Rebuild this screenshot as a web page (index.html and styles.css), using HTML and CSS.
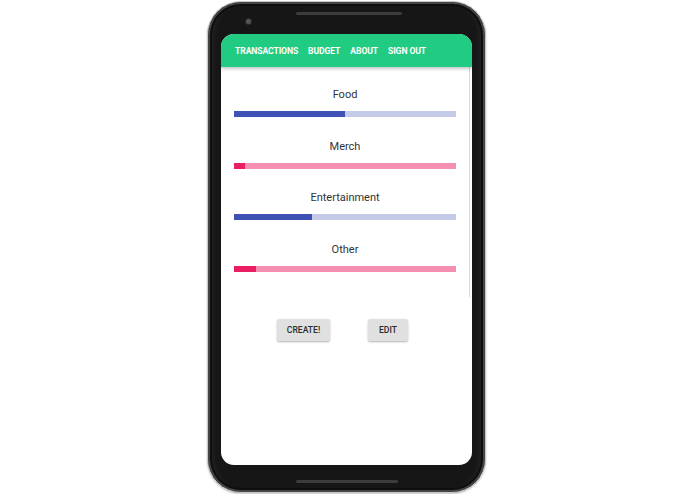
FILE: index.html
```html
<!DOCTYPE html>
<html>
<head>
<meta charset="utf-8">
<link rel="stylesheet" href="styles.css">
</head>
<body>
<div class="phone">
  <div class="speaker top"></div>
  <div class="camera"></div>
  <div class="screen">
    <nav class="appbar">
      <span>TRANSACTIONS</span>
      <span>BUDGET</span>
      <span>ABOUT</span>
      <span>SIGN OUT</span>
    </nav>
    <div class="content">
      <div class="scrollbar"></div>
      <section class="cat">
        <div class="label">Food</div>
        <div class="bar blue"><div class="fill" style="width:50%"></div></div>
      </section>
      <section class="cat">
        <div class="label">Merch</div>
        <div class="bar pink"><div class="fill" style="width:5%"></div></div>
      </section>
      <section class="cat">
        <div class="label">Entertainment</div>
        <div class="bar blue"><div class="fill" style="width:35%"></div></div>
      </section>
      <section class="cat">
        <div class="label">Other</div>
        <div class="bar pink"><div class="fill" style="width:10%"></div></div>
      </section>
      <div class="actions">
        <button class="btn create">CREATE!</button>
        <button class="btn edit">EDIT</button>
      </div>
    </div>
  </div>
  <div class="speaker bottom"></div>
</div>
</body>
</html>
```
FILE: styles.css
```css
html, body {
  margin: 0;
  padding: 0;
  background: #ffffff;
  width: 695px;
  height: 494px;
  overflow: hidden;
  font-family: Roboto, "Liberation Sans", Arial, sans-serif;
}

.phone {
  position: relative;
  box-sizing: border-box;
  margin: 1px 0 0 207px;
  width: 279px;
  height: 492px;
  padding: 32px 13px 26px 13px;
  border-radius: 34px;
  border: 1px solid #c8c8c8;
  background: #161616;
  box-shadow:
    inset 0 0 0 2px #454545,
    inset 0 0 0 4px #0e0e0e,
    inset 5px 0 6px rgba(255,255,255,0.07),
    inset -5px 0 6px rgba(255,255,255,0.07),
    0 1px 2px rgba(0,0,0,0.25);
}

.speaker {
  position: absolute;
  left: 88px;
  width: 106px;
  height: 3px;
  border-radius: 2px;
  background: #3c3c3c;
}
.speaker.top { top: 10px; }
.speaker.bottom { top: 478px; left: 88px; width: 102px; }

.camera {
  position: absolute;
  left: 38px;
  top: 17px;
  width: 5px;
  height: 5px;
  border-radius: 50%;
  background: #555;
  box-shadow: 0 0 0 1px #2a2a2a;
}

.screen {
  width: 251px;
  height: 431px;
  background: #ffffff;
  border-radius: 13px;
  overflow: hidden;
  display: flex;
  flex-direction: column;
}

.appbar {
  height: 33px;
  flex: 0 0 33px;
  background: #21cb81;
  display: flex;
  align-items: center;
  gap: 10px;
  padding-left: 14px;
  color: #ffffff;
  font-weight: 700;
  font-size: 8.6px;
  letter-spacing: -0.1px;
  box-shadow: 0 2px 3px rgba(0,0,0,0.22);
  position: relative;
  z-index: 1;
}

.content {
  position: relative;
  flex: 1;
  width: 248px;
  padding-top: 21px;
}

.scrollbar {
  position: absolute;
  right: -1px;
  top: 0;
  width: 1px;
  height: 230px;
  background: #d9d9d9;
}

.cat {
  margin-bottom: 22.5px;
}

.label {
  text-align: center;
  font-size: 11px;
  line-height: 14px;
  color: #333333;
  margin-bottom: 9px;
}

.bar {
  margin: 0 13px;
  height: 6px;
  display: flex;
}
.bar .fill { height: 100%; }
.bar.blue { background: #c5cae9; }
.bar.blue .fill { background: #3f51b5; }
.bar.pink { background: #f48fb1; }
.bar.pink .fill { background: #e91e63; }

.actions {
  display: flex;
  justify-content: center;
  gap: 38px;
  margin-top: 47px;
  padding-right: 5px;
}

.btn {
  height: 22px;
  border: none;
  border-radius: 2px;
  background: #e0e0e0;
  color: #2b2b2b;
  font-family: Roboto, "Liberation Sans", Arial, sans-serif;
  font-weight: 500;
  font-size: 8.6px;
  padding: 0;
  box-shadow: 0 1px 2px rgba(0,0,0,0.3);
}
.btn.create { width: 53px; }
.btn.edit { width: 40px; }
```
